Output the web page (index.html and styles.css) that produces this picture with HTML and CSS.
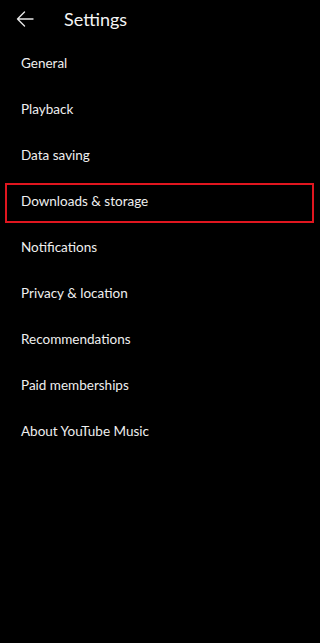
FILE: index.html
```html
<!DOCTYPE html>
<html lang="en">
<head>
  <meta charset="UTF-8">
  <meta name="viewport" content="width=device-width, initial-scale=1.0">
  <title>Settings</title>
  <link rel="stylesheet" href="styles.css">
</head>
<body>
  <!-- Top bar -->
  <div class="top-bar">
    <button class="back-btn" aria-label="Back">
      <svg width="18" height="16" viewBox="0 0 18 16">
        <path d="M1.5 8 H17 M8.5 1 L1.5 8 L8.5 15" fill="none" stroke="#e6e6e6" stroke-width="1.4" stroke-linecap="round" stroke-linejoin="round"/>
      </svg>
    </button>
    <span class="title">Settings</span>
  </div>

  <!-- Settings list -->
  <ul class="settings-list">
    <li class="item">General</li>
    <li class="item">Playback</li>
    <li class="item">Data saving</li>
    <li class="item highlight">Downloads &amp; storage</li>
    <li class="item">Notifications</li>
    <li class="item">Privacy &amp; location</li>
    <li class="item">Recommendations</li>
    <li class="item">Paid memberships</li>
    <li class="item">About YouTube Music</li>
  </ul>
</body>
</html>
```

FILE: styles.css
```css
/* General Styling */
body {
  margin: 0;
  background: #000;
  color: #f2f2f2;
  font-family: Lato, "Noto Sans", Arial, sans-serif;
  height: 643px;
}

/* Top Bar */
.top-bar {
  display: flex;
  align-items: center;
  height: 37px;
}

.back-btn {
  background: none;
  border: none;
  padding: 0;
  margin-left: 16px;
  width: 18px;
  height: 16px;
  display: flex;
}

.title {
  margin-left: 30px;
  font-size: 18px;
  color: #f5f5f5;
}

/* Settings List */
.settings-list {
  list-style: none;
  margin: 0;
  padding: 0;
  padding-top: 3px;
}

.item {
  position: relative;
  height: 46px;
  display: flex;
  align-items: center;
  padding-left: 21px;
  font-size: 13.5px;
  color: #efefef;
}

.item.highlight::after {
  content: "";
  position: absolute;
  top: 5px;
  bottom: 1px;
  left: 5px;
  right: 6px;
  border: 2px solid #e0161f;
}
```
